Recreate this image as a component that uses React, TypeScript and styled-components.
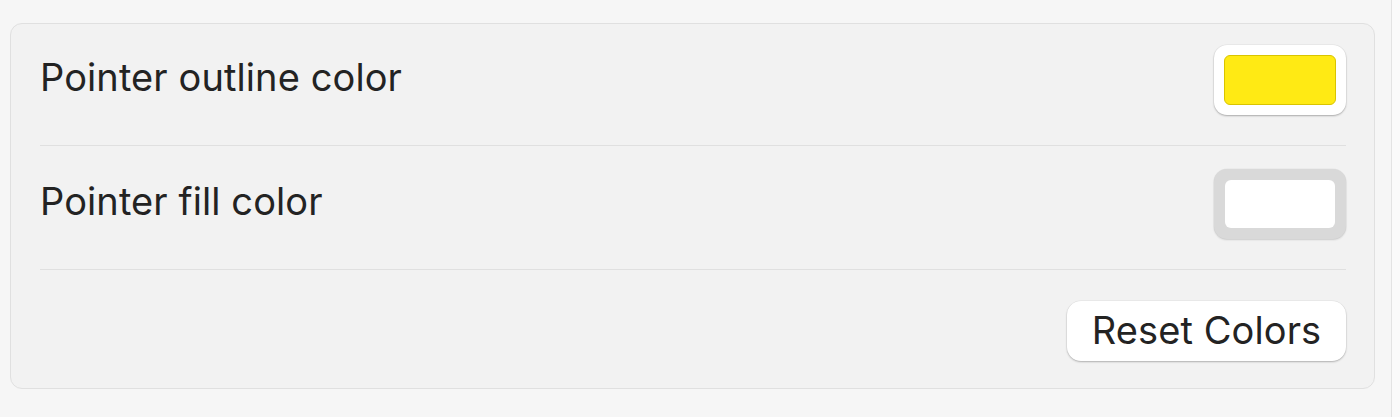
import React from 'react'
import styled, { createGlobalStyle } from 'styled-components'

const GlobalStyle = createGlobalStyle`
html, body {
  margin: 0;
  padding: 0;
  background: #f6f6f6;
  font-family: Inter, "Liberation Sans", Arial, sans-serif;
}
`

type SwatchProps = {
  variant: 'active' | 'idle'
  color: string
}

const rows = [
  { label: 'Pointer outline color', color: '#ffea14', variant: 'active' as const },
  { label: 'Pointer fill color', color: '#ffffff', variant: 'idle' as const },
]

const App: React.FC = () => {
  return (
    <>
      <GlobalStyle />
      <Window>
        <Content>
          <Panel>
            {rows.map((r) => (
              <Row key={r.label}>
                <Label>{r.label}</Label>
                <Swatch variant={r.variant} color={r.color}>
                  <SwatchFill variant={r.variant} color={r.color} />
                </Swatch>
              </Row>
            ))}
            <Footer>
              <ResetButton>Reset Colors</ResetButton>
            </Footer>
          </Panel>
        </Content>
        <EdgeStrip />
      </Window>
    </>
  )
}

export default App

const Window = styled.div`
display: flex;
width: 1400px;
height: 417px;
`

const Content = styled.div`
flex: 1;
padding: 23px 16px 0 10px;
border-right: 1px solid #e3e3e3;
`

const EdgeStrip = styled.div`
width: 8px;
background: #fafafa;
`

const Panel = styled.div`
box-sizing: border-box;
width: 1365px;
height: 366px;
background: #f2f2f2;
border: 1px solid #e0e0e0;
border-radius: 12px;
padding: 0 28px 0 29px;
`

const Row = styled.div`
display: flex;
align-items: center;
justify-content: space-between;
padding: 21px 0 30px;
border-bottom: 1px solid #e0e0e0;
& + & {
  padding-top: 23px;
}
`

const Label = styled.span`
font-size: 38px;
letter-spacing: 0.1px;
color: #232323;
margin-top: -6px;
`

const Swatch = styled.div<SwatchProps>`
box-sizing: border-box;
width: 132px;
height: 70px;
border-radius: 13px;
padding: ${(p) => (p.variant === 'active' ? '10px' : '11px')};
background: ${(p) => (p.variant === 'active' ? '#ffffff' : '#d9d9d9')};
box-shadow: ${(p) =>
  p.variant === 'active'
    ? '0 1px 2px rgba(0,0,0,0.28), 0 0 0 0.5px rgba(0,0,0,0.06)'
    : '0 1px 2px rgba(0,0,0,0.14), 0 0 0 0.5px rgba(0,0,0,0.05)'};
`

const SwatchFill = styled.div<SwatchProps>`
box-sizing: border-box;
width: 100%;
height: 100%;
border-radius: 6px;
background: ${(p) => p.color};
border: ${(p) => (p.variant === 'active' ? '1px solid #d9c400' : 'none')};
`

const Footer = styled.div`
display: flex;
justify-content: flex-end;
padding-top: 31px;
`

const ResetButton = styled.button`
box-sizing: border-box;
width: 279px;
height: 60px;
background: #ffffff;
border: none;
border-radius: 14px;
box-shadow: 0 1px 2px rgba(0,0,0,0.25), 0 0 0 0.5px rgba(0,0,0,0.06);
font-family: inherit;
font-size: 38px;
letter-spacing: 0.1px;
color: #232323;
padding: 0 0 2px;
cursor: pointer;
`
